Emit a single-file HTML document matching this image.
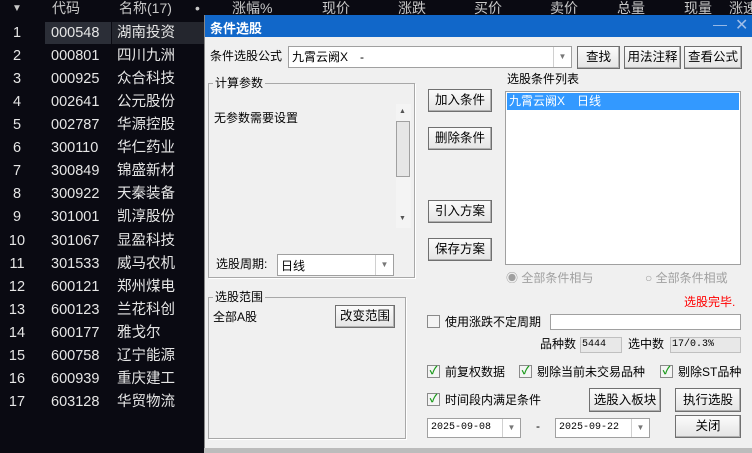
<!DOCTYPE html><html><head><meta charset="utf-8"><style>
*{margin:0;padding:0;box-sizing:border-box}
body{width:752px;height:453px;background:#0a0a12;position:relative;overflow:hidden;font-family:"Liberation Sans","Noto Sans CJK SC",sans-serif}
.a{position:absolute;white-space:nowrap}
.h{color:#c8c8c8;font-size:14px;top:0;line-height:17px}
.r{color:#e6e6e6;font-size:14.5px;line-height:20px}
.d{font-size:12px;color:#000;line-height:16px}
.btn{position:absolute;background:linear-gradient(#fbfbfb,#e4e4e4);border:1px solid #707070;box-shadow:inset -1px -1px #b0b0b0;font-size:12.5px;text-align:center;font-family:"Liberation Sans","Noto Sans CJK SC",sans-serif}
.box{position:absolute;background:#fff;border:1px solid #a0a0a0}
.grp{position:absolute;border:1px solid #a8a8a8;box-shadow:1px 1px #fff}
.cb{position:absolute;width:13px;height:13px;border:1px solid #8a8a8a;background:#f4f4f4;font-size:11px;line-height:11px;color:#1a9a1a;text-align:center;font-weight:bold}
.arr{position:absolute;right:0;top:0;bottom:0;width:18px;border-left:1px solid #d0d0d0;color:#777;font-size:8px;text-align:center}
.mono{font:10px 'Liberation Mono',monospace}
</style></head><body>
<div class="a h" style="left:12px;font-size:10px">▼</div>
<div class="a h" style="left:52px">代码</div>
<div class="a h" style="left:119px">名称(17)</div>
<div class="a h" style="left:195px">•</div>
<div class="a h" style="left:232px">涨幅%</div>
<div class="a h" style="left:322px">现价</div>
<div class="a h" style="left:398px">涨跌</div>
<div class="a h" style="left:474px">买价</div>
<div class="a h" style="left:550px">卖价</div>
<div class="a h" style="left:617px">总量</div>
<div class="a h" style="left:684px">现量</div>
<div class="a h" style="left:729px">涨速</div>
<div class="a" style="left:45px;top:22px;width:66px;height:22px;background:#2b2e37"></div>
<div class="a" style="left:112px;top:22px;width:92px;height:22px;background:#24262e"></div>
<div id="rows"></div>
<script>
var d=[["000548","湖南投资"],["000801","四川九洲"],["000925","众合科技"],["002641","公元股份"],["002787","华源控股"],["300110","华仁药业"],["300849","锦盛新材"],["300922","天秦装备"],["301001","凯淳股份"],["301067","显盈科技"],["301533","威马农机"],["600121","郑州煤电"],["600123","兰花科创"],["600177","雅戈尔"],["600758","辽宁能源"],["600939","重庆建工"],["603128","华贸物流"]];
var h="";d.forEach(function(x,i){var t=23+i*23.06;h+='<div class="a r" style="left:0;width:34px;text-align:center;top:'+t+'px">'+(i+1)+'</div><div class="a r" style="left:51px;top:'+t+'px">'+x[0]+'</div><div class="a r" style="left:117px;top:'+t+'px">'+x[1]+'</div>';});
document.getElementById("rows").innerHTML=h;
</script>
<div class="a" style="left:204px;top:15px;width:548px;height:438px;background:#f0f0f0;border-left:1px solid #888">
<div class="a" style="left:0;top:0;width:548px;height:22px;background:#1167c9"></div>
<div class="a" style="left:5px;top:3px;color:#fff;font-size:13px;font-weight:bold">条件选股</div>
<div class="a" style="left:508px;top:1px;color:#9fbde8;font-size:14px">—</div>
<div class="a" style="left:530px;top:0px;color:#9fbde8;font-size:16px">✕</div>
</div>
<div class="a d" style="left:210px;top:48px">条件选股公式</div>
<div class="box" style="left:288px;top:46px;width:284px;height:22px"><span class="a d" style="left:3px;top:2px">九霄云阙X　-</span><div class="arr" style="line-height:20px">▼</div></div>
<div class="btn" style="left:577px;top:46px;width:43px;height:23px;line-height:21px">查找</div>
<div class="btn" style="left:624px;top:46px;width:57px;height:23px;line-height:21px">用法注释</div>
<div class="btn" style="left:684px;top:46px;width:58px;height:23px;line-height:21px">查看公式</div>
<div class="grp" style="left:208px;top:83px;width:207px;height:195px"></div>
<div class="a d" style="left:213px;top:75px;background:#f0f0f0;padding:0 2px">计算参数</div>
<div class="a d" style="left:214px;top:110px">无参数需要设置</div>
<div class="a" style="left:396px;top:104px;width:15px;height:124px;background:#f4f4f4"></div>
<div class="a" style="left:396px;top:121px;width:14px;height:56px;background:#e6e6e6;border:1px solid #a0a0a0"></div>
<div class="a" style="left:399px;top:108px;font-size:7px;color:#555">▲</div>
<div class="a" style="left:399px;top:215px;font-size:7px;color:#555">▼</div>
<div class="a d" style="left:216px;top:256px">选股周期:</div>
<div class="box" style="left:277px;top:254px;width:117px;height:22px"><span class="a d" style="left:3px;top:3px">日线</span><div class="arr" style="line-height:20px">▼</div></div>
<div class="grp" style="left:208px;top:297px;width:198px;height:142px"></div>
<div class="a d" style="left:213px;top:289px;background:#f0f0f0;padding:0 2px">选股范围</div>
<div class="a d" style="left:213px;top:309px">全部A股</div>
<div class="btn" style="left:335px;top:305px;width:60px;height:23px;line-height:21px">改变范围</div>
<div class="btn" style="left:428px;top:89px;width:64px;height:23px;line-height:21px">加入条件</div>
<div class="btn" style="left:428px;top:127px;width:64px;height:23px;line-height:21px">删除条件</div>
<div class="btn" style="left:428px;top:200px;width:64px;height:23px;line-height:21px">引入方案</div>
<div class="btn" style="left:428px;top:238px;width:64px;height:23px;line-height:21px">保存方案</div>
<div class="a d" style="left:507px;top:71px">选股条件列表</div>
<div class="box" style="left:505px;top:91px;width:236px;height:174px"><div class="a d" style="left:1px;top:1px;width:232px;height:17px;background:#3399ff;color:#fff;padding-left:2px">九霄云阙X　日线</div></div>
<div class="a d" style="left:506px;top:270px;color:#a0a0a0">◉ 全部条件相与</div>
<div class="a d" style="left:645px;top:270px;color:#a0a0a0">○ 全部条件相或</div>
<div class="a d" style="left:684px;top:294px;color:#f00">选股完毕.</div>
<div class="cb" style="left:427px;top:315px"></div>
<div class="a d" style="left:445px;top:314px">使用涨跌不定周期</div>
<div class="box" style="left:550px;top:314px;width:191px;height:16px"></div>
<div class="a d" style="left:540px;top:336px">品种数</div>
<div class="a mono" style="left:580px;top:337px;width:42px;height:16px;background:#e8e8e8;border:1px solid #c0c0c0;line-height:14px;padding-left:1px">5444</div>
<div class="a d" style="left:628px;top:336px">选中数</div>
<div class="a mono" style="left:670px;top:337px;width:71px;height:16px;background:#e8e8e8;border:1px solid #c0c0c0;line-height:14px;padding-left:1px">17/0.3%</div>
<div class="cb" style="left:427px;top:365px">✓</div><div class="a d" style="left:445px;top:364px">前复权数据</div>
<div class="cb" style="left:519px;top:365px">✓</div><div class="a d" style="left:537px;top:364px">剔除当前未交易品种</div>
<div class="cb" style="left:660px;top:365px">✓</div><div class="a d" style="left:678px;top:364px">剔除ST品种</div>
<div class="cb" style="left:427px;top:393px">✓</div><div class="a d" style="left:445px;top:392px">时间段内满足条件</div>
<div class="btn" style="left:589px;top:388px;width:72px;height:24px;line-height:22px">选股入板块</div>
<div class="btn" style="left:675px;top:388px;width:66px;height:24px;line-height:22px">执行选股</div>
<div class="box" style="left:427px;top:418px;width:94px;height:20px"><span class="a mono" style="left:3px;top:3px">2025-09-08</span><div class="arr" style="line-height:18px">▼</div></div>
<div class="a d" style="left:536px;top:418px">-</div>
<div class="box" style="left:555px;top:418px;width:95px;height:20px"><span class="a mono" style="left:3px;top:3px">2025-09-22</span><div class="arr" style="line-height:18px">▼</div></div>
<div class="btn" style="left:675px;top:415px;width:66px;height:23px;line-height:21px">关闭</div>
<div class="a" style="left:204px;top:448px;width:548px;height:5px;background:#bcbcbc"></div>
</body></html>
